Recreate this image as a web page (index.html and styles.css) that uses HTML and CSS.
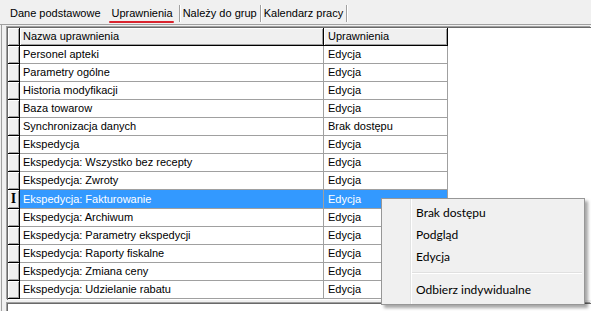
FILE: index.html
```html
<!DOCTYPE html>
<html lang="pl">
<head>
    <meta charset="UTF-8">
    <title>Uprawnienia</title>
    <link rel="stylesheet" href="styles.css">
</head>
<body>

<div class="tabs">
    <div class="tab first">Dane podstawowe</div>
    <div class="tab active"><span class="underline">Uprawnienia</span></div>
    <div class="tab">Należy do grup</div>
    <div class="tab">Kalendarz pracy</div>
</div>

<div class="page">
    <div class="grid">
        <table>
            <thead>
                <tr>
                    <th class="ind"></th>
                    <th class="name">Nazwa uprawnienia</th>
                    <th class="value">Uprawnienia</th>
                </tr>
            </thead>
            <tbody>
                <tr><td class="ind"></td><td>Personel apteki</td><td>Edycja</td></tr>
                <tr><td class="ind"></td><td>Parametry ogólne</td><td>Edycja</td></tr>
                <tr><td class="ind"></td><td>Historia modyfikacji</td><td>Edycja</td></tr>
                <tr><td class="ind"></td><td>Baza towarow</td><td>Edycja</td></tr>
                <tr><td class="ind"></td><td>Synchronizacja danych</td><td>Brak dostępu</td></tr>
                <tr><td class="ind"></td><td>Ekspedycja</td><td>Edycja</td></tr>
                <tr><td class="ind"></td><td>Ekspedycja: Wszystko bez recepty</td><td>Edycja</td></tr>
                <tr><td class="ind"></td><td>Ekspedycja: Zwroty</td><td>Edycja</td></tr>
                <tr class="selected"><td class="ind"><span class="ibeam">I</span></td><td>Ekspedycja: Fakturowanie</td><td>Edycja</td></tr>
                <tr><td class="ind"></td><td>Ekspedycja: Archiwum</td><td>Edycja</td></tr>
                <tr><td class="ind"></td><td>Ekspedycja: Parametry ekspedycji</td><td>Edycja</td></tr>
                <tr><td class="ind"></td><td>Ekspedycja: Raporty fiskalne</td><td>Edycja</td></tr>
                <tr><td class="ind"></td><td>Ekspedycja: Zmiana ceny</td><td>Edycja</td></tr>
                <tr><td class="ind"></td><td>Ekspedycja: Udzielanie rabatu</td><td>Edycja</td></tr>
            </tbody>
        </table>
    </div>
    <div class="lower"></div>
</div>

<!-- popup menu for the selected row -->
<div class="menu">
    <div class="menu-item">Brak dostępu</div>
    <div class="menu-item">Podgląd</div>
    <div class="menu-item">Edycja</div>
    <div class="menu-sep"></div>
    <div class="menu-item">Odbierz indywidualne</div>
</div>

</body>
</html>
```

FILE: styles.css
```css
body {
    margin: 0;
    width: 591px;
    height: 311px;
    overflow: hidden;
    background-color: #f0f0f0;
    font-family: "Liberation Sans", Arial, sans-serif;
    font-size: 11px;
    color: #000;
    position: relative;
}
.tabs {
    display: flex;
    align-items: center;
    height: 25px;
    border-bottom: 1px solid #a0a0a0;
    box-sizing: border-box;
    padding-top: 2px;
}
.tab {
    height: 17px;
    line-height: 17px;
    padding: 0 3px 0 3px;
    border-right: 1px solid #a0a0a0;
    box-shadow: 1px 0 0 #fff;
}
.tab.first {
    padding-left: 10px;
    padding-right: 8px;
    border-right: none;
    box-shadow: none;
}
.tab.active {
    padding-right: 6px;
}
.underline {
    display: inline-block;
    position: relative;
}
.underline::after {
    content: "";
    position: absolute;
    left: -3px;
    right: -1px;
    bottom: -1px;
    height: 2px;
    background-color: #d9232e;
    border-radius: 1px;
}
.page {
    padding: 1px 0 0 5px;
    border-left: 1px solid #a0a0a0;
    margin-left: 1px;
    height: 286px;
}
.grid {
    background-color: #fff;
    border-top: 1px solid #696969;
    border-left: 1px solid #696969;
    box-shadow: -1px -1px 0 #a0a0a0;
    height: 272px;
    margin-top: 1px;
}
table {
    border-collapse: collapse;
    table-layout: fixed;
}
th, td {
    height: 17px;
    padding: 0 0 0 3px;
    line-height: 17px;
    text-align: left;
    font-weight: normal;
    white-space: nowrap;
    overflow: hidden;
    border-right: 1px solid #a0a0a0;
    border-bottom: 1px solid #a0a0a0;
}
th {
    background-color: #f0f0f0;
    border-right: 1px solid #000;
    border-bottom: 1px solid #000;
    box-shadow: inset 1px 1px 0 #fff, inset -1px -1px 0 #a0a0a0;
}
th.name {
    width: 300px;
}
th.value {
    width: 119px;
    padding-left: 4px;
}
td:last-child {
    padding-left: 4px;
}
.ind {
    width: 11px;
    padding: 0;
    background-color: #f0f0f0;
    border-right: 1px solid #000;
    border-bottom: 1px solid #000;
    box-shadow: inset 1px 1px 0 #fff, inset -1px -1px 0 #a0a0a0;
    text-align: center;
}
.selected td {
    background-color: #3399ff;
    color: #fff;
}
.selected td.ind {
    background-color: #f0f0f0;
    color: #000;
}
.ibeam {
    font-family: "Liberation Serif", serif;
    font-weight: bold;
    font-size: 14px;
}
.lower {
    margin-top: 3px;
    height: 10px;
    border-top: 1px solid #696969;
    border-left: 1px solid #696969;
    background-color: #fff;
    box-shadow: -1px -1px 0 #a0a0a0;
}
.menu {
    position: absolute;
    left: 381px;
    top: 198px;
    width: 202px;
    padding: 3px 0;
    background-color: #f0f0f0;
    border: 1px solid #979797;
    box-shadow: 3px 3px 3px rgba(0, 0, 0, 0.35);
    font-family: Lato, "Noto Sans", sans-serif;
    font-size: 12px;
    background-image: linear-gradient(to right, transparent 28px, #e2e3e3 28px, #e2e3e3 29px, #fff 29px, #fff 30px, transparent 30px);
}
.menu-item {
    height: 22px;
    line-height: 22px;
    padding-left: 34px;
}
.menu-sep {
    height: 1px;
    margin: 4px 2px 5px 30px;
    background-color: #e0e0e0;
    border-bottom: 1px solid #fff;
}
```
